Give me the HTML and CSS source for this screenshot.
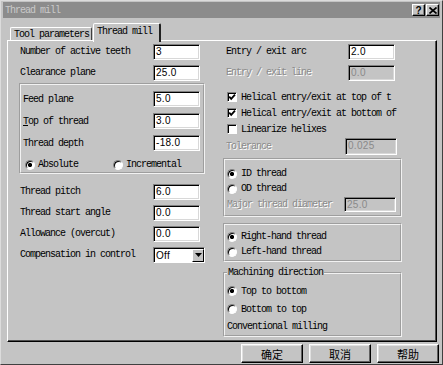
FILE: index.html
```html
<!DOCTYPE html>
<html lang="en">
<head>
    <meta charset="UTF-8">
    <meta name="viewport" content="width=device-width, initial-scale=1.0">
    <title>Thread mill</title>
    <link rel="stylesheet" href="styles.css">
</head>
<body>

    <div class="dialog">
        <div class="titlebar">
            <span class="title">Thread mill</span>
            <div class="caption-btns">
                <span class="cap-btn">?</span>
                <span class="cap-btn">
                    <svg width="8" height="7" viewBox="0 0 8 7"><path d="M0.5 0.5 L7.5 6.5 M7.5 0.5 L0.5 6.5" stroke="#000" stroke-width="1.7"/></svg>
                </span>
            </div>
        </div>

        <!-- Schede -->
        <div class="tabs">
            <div class="tab">Tool parameters</div>
            <div class="tab active">Thread mill</div>
        </div>

        <div class="panel">
            <div class="col col-left">
                <div class="row"><span class="lbl">Number of active teeth</span><span class="field">3</span></div>
                <div class="row"><span class="lbl">Clearance plane</span><span class="field">25.0</span></div>

                <div class="group group-depth">
                    <div class="row row-g"><span class="lbl">Feed plane</span><span class="field">5.0</span></div>
                    <div class="row row-g"><span class="lbl"><u>T</u>op of thread</span><span class="field">3.0</span></div>
                    <div class="row row-g"><span class="lbl">Thread depth</span><span class="field">-18.0</span></div>
                    <div class="radio-pair">
                        <span class="opt opt-first"><span class="radio on"></span>Absolute</span>
                        <span class="opt"><span class="radio"></span>Incremental</span>
                    </div>
                </div>

                <div class="rows-bottom">
                    <div class="row"><span class="lbl">Thread pitch</span><span class="field">6.0</span></div>
                    <div class="row"><span class="lbl">Thread start angle</span><span class="field">0.0</span></div>
                    <div class="row"><span class="lbl">Allowance (overcut)</span><span class="field">0.0</span></div>
                    <div class="row">
                        <span class="lbl">Compensation in control</span>
                        <span class="combo">
                            <span class="combo-val">Off</span>
                            <span class="combo-btn"><svg width="7" height="4" viewBox="0 0 7 4"><path d="M0 0 H7 L3.5 4 Z" fill="#000"/></svg></span>
                        </span>
                    </div>
                </div>
            </div>

            <div class="col col-right">
                <div class="row"><span class="lbl">Entry / exit arc</span><span class="field">2.0</span></div>
                <div class="row disabled"><span class="lbl">Entry / exit line</span><span class="field off">0.0</span></div>

                <div class="checks">
                    <div class="check-row"><span class="check"><svg width="8" height="8" viewBox="0 0 8 8"><path d="M1.2 3.6 L3.2 5.8 L7 1.6" fill="none" stroke="#000" stroke-width="1.8"/></svg></span>Helical entry/exit at top of t</div>
                    <div class="check-row"><span class="check"><svg width="8" height="8" viewBox="0 0 8 8"><path d="M1.2 3.6 L3.2 5.8 L7 1.6" fill="none" stroke="#000" stroke-width="1.8"/></svg></span>Helical entry/exit at bottom of</div>
                    <div class="check-row"><span class="check"></span>Linearize helixes</div>
                </div>

                <div class="row row-tol disabled"><span class="lbl">Tolerance</span><span class="field off wide">0.025</span></div>

                <div class="group group-id">
                    <div class="opt-row"><span class="radio on"></span>ID thread</div>
                    <div class="opt-row"><span class="radio"></span>OD thread</div>
                    <div class="row row-major disabled"><span class="lbl">Major thread diameter</span><span class="field off wide">25.0</span></div>
                </div>

                <div class="group group-hand">
                    <div class="opt-row"><span class="radio on"></span>Right-hand thread</div>
                    <div class="opt-row"><span class="radio"></span>Left-hand thread</div>
                </div>

                <fieldset class="group group-dir">
                    <legend>Machining direction</legend>
                    <div class="opt-row"><span class="radio on"></span>Top to bottom</div>
                    <div class="opt-row"><span class="radio"></span>Bottom to top</div>
                    <div class="note">Conventional milling</div>
                </fieldset>
            </div>
        </div>

        <div class="buttons">
            <span class="btn">确定</span>
            <span class="btn">取消</span>
            <span class="btn">帮助</span>
        </div>
    </div>

</body>
</html>
```

FILE: styles.css
```css
* {
    box-sizing: border-box;
}

body {
    margin: 0;
    background-color: #c4c4c4;
    color: #000;
    font-family: "Liberation Mono", "DejaVu Sans Mono", monospace;
    font-size: 10px;
    letter-spacing: -1px;
}

.dialog {
    width: 443px;
    height: 365px;
    overflow: hidden;
    display: flex;
    flex-direction: column;
    background-color: #c4c4c4;
    border: 1px solid;
    border-color: #dcdcdc #404040 #404040 #dcdcdc;
    padding: 1px 2px 0 2px;
}

/* Barra del titolo */
.titlebar {
    height: 16px;
    flex: none;
    display: flex;
    align-items: center;
    justify-content: space-between;
    background-color: #8c8c8c;
    color: #cacaca;
    padding: 0 1px 0 2px;
}

.caption-btns {
    display: flex;
    gap: 1px;
}

.cap-btn {
    width: 13px;
    height: 12px;
    display: flex;
    align-items: center;
    justify-content: center;
    background-color: #c4c4c4;
    color: #000;
    font-family: "Liberation Sans", sans-serif;
    font-weight: bold;
    font-size: 10px;
    letter-spacing: 0;
    border: 1px solid;
    border-color: #fff #000 #000 #fff;
    box-shadow: inset -1px -1px #808080;
}

/* Schede */
.tabs {
    height: 17px;
    flex: none;
    display: flex;
    align-items: flex-end;
    margin: 5px 0 0 4px;
    padding-left: 3px;
}

.tab {
    height: 13px;
    width: 82px;
    display: flex;
    align-items: center;
    padding-left: 3px;
    border: 1px solid;
    border-bottom: none;
    border-color: #fff #404040 transparent #fff;
    border-radius: 2px 2px 0 0;
}

.tab.active {
    position: relative;
    z-index: 1;
    width: 68px;
    height: 19px;
    margin-left: 1px;
    margin-bottom: -2px;
    padding-bottom: 3px;
    background-color: #c4c4c4;
    border-right: 2px solid #202020;
}

.panel {
    width: 430px;
    height: 302px;
    flex: none;
    margin-left: 4px;
    display: flex;
    gap: 18px;
    padding-left: 11px;
    border: 1px solid;
    border-color: #fff #000 #000 #fff;
    box-shadow: inset -1px -1px #505050;
}

.col-left {
    width: 186px;
}

.col-right {
    width: 179px;
}

.row {
    height: 21px;
    display: flex;
    align-items: center;
}

.lbl {
    white-space: nowrap;
    flex: none;
}

.col-left .row .lbl {
    width: 134px;
    padding-left: 1px;
}

/* Campi di testo incassati */
.field {
    width: 47px;
    height: 16px;
    flex: none;
    background-color: #fff;
    border: 1px solid;
    border-color: #808080 #fff #fff #808080;
    box-shadow: inset 1px 1px #000, inset -1px -1px #d8d8d8;
    font-family: "Liberation Sans", sans-serif;
    font-size: 10px;
    letter-spacing: 0.3px;
    line-height: 14px;
    padding-left: 2px;
}

.field.off {
    background-color: #c4c4c4;
    color: #8a8a8a;
}

.field.wide {
    width: 52px;
}

.disabled .lbl {
    color: #8a8a8a;
    text-shadow: 1px 1px 0 #fff;
}

/* Riquadri di gruppo */
.group {
    border: 2px groove #f2f2f2;
}

.group-depth {
    height: 91px;
    padding: 3px 0 0 2px;
}

.group-depth .row-g {
    height: 22px;
}

.group-depth .row .lbl {
    width: 130px;
    padding-left: 0;
}

.radio-pair {
    height: 18px;
    padding: 3px 0 0 2px;
    display: flex;
    align-items: center;
}

.opt {
    display: flex;
    align-items: center;
    gap: 3px;
}

.opt-first {
    width: 88px;
}

.radio {
    width: 10px;
    height: 10px;
    flex: none;
    border-radius: 50%;
    background-color: #fff;
    border: 1px solid;
    border-color: #808080 #fff #fff #808080;
    box-shadow: inset 1px 1px #000;
}

.radio.on {
    background: radial-gradient(circle, #000 0 1.8px, #fff 2.4px);
}

.rows-bottom {
    margin-top: 7px;
}

.combo {
    width: 60px;
    height: 16px;
    display: flex;
    justify-content: space-between;
    background-color: #fff;
    border: 1px solid;
    border-color: #808080 #fff #fff #808080;
    box-shadow: inset 1px 1px #000;
    padding: 1px 0 0 2px;
}

.combo-val {
    font-family: "Liberation Sans", sans-serif;
    font-size: 10px;
    letter-spacing: 0.3px;
    line-height: 13px;
}

.combo-btn {
    width: 12px;
    height: 13px;
    display: flex;
    align-items: center;
    justify-content: center;
    background-color: #c4c4c4;
    border: 1px solid;
    border-color: #fff #000 #000 #fff;
}

/* Colonna destra */
.col-right .row .lbl {
    width: 125px;
    padding-left: 3px;
}

.checks {
    margin-top: 6px;
}

.check-row {
    height: 16px;
    display: flex;
    align-items: center;
    gap: 4px;
    padding-left: 4px;
    white-space: nowrap;
}

.check {
    width: 10px;
    height: 10px;
    flex: none;
    display: flex;
    align-items: center;
    justify-content: center;
    background-color: #fff;
    border: 1px solid;
    border-color: #808080 #fff #fff #808080;
    box-shadow: inset 1px 1px #000;
}

.col-right .row-tol {
    height: 19px;
}

.col-right .row-tol .lbl {
    width: 122px;
}

.row-tol .field {
    height: 17px;
}

.group-id {
    margin-top: 2px;
    padding: 6px 0 3px 2px;
}

.opt-row {
    height: 15px;
    display: flex;
    align-items: center;
    gap: 4px;
    white-space: nowrap;
}

.col-right .row-major {
    height: 16px;
}

.col-right .row-major .lbl {
    width: 117px;
    padding-left: 0;
}

.row-major .field {
    height: 15px;
    line-height: 13px;
}

.group-hand {
    margin-top: 6px;
    padding: 4px 0 1px 2px;
}

.group-dir {
    margin: 5px 0 0 0;
    padding: 3px 0 0 2px;
    min-width: 0;
}

.group-dir legend {
    padding: 0 1px;
    line-height: 12px;
}

.group-dir .opt-row {
    height: 18px;
}

.note {
    height: 17px;
    display: flex;
    align-items: center;
}

/* Pulsanti in basso */
.buttons {
    display: flex;
    justify-content: flex-end;
    gap: 6px;
    margin-top: 2px;
    padding-right: 1px;
}

.btn {
    width: 62px;
    height: 19px;
    display: flex;
    align-items: center;
    justify-content: center;
    font-family: "Noto Sans CJK SC", sans-serif;
    font-size: 11px;
    letter-spacing: 0;
    border: 1px solid;
    border-color: #fff #000 #000 #fff;
    box-shadow: inset -1px -1px #606060, inset 1px 1px #e0e0e0;
}
```
